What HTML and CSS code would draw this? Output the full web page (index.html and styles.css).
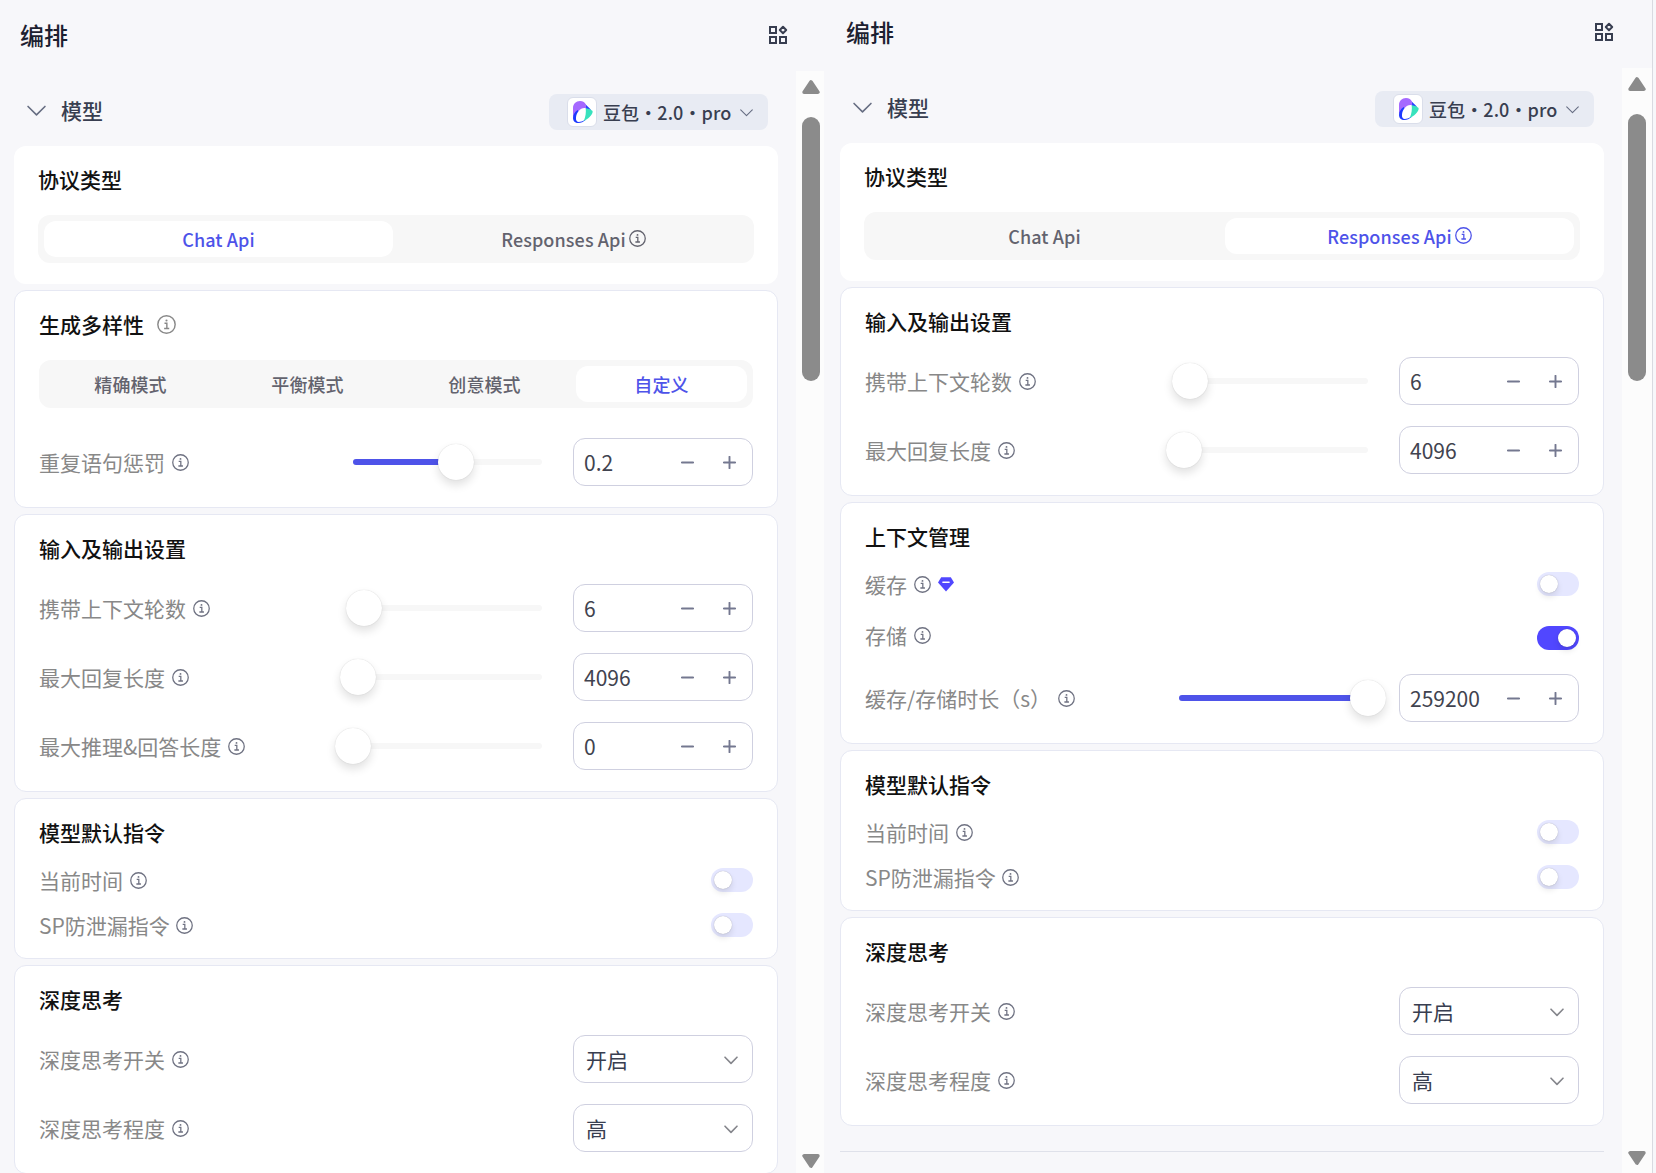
FILE: index.html
```html
<!doctype html>
<html lang="zh-CN">
<head>
    <meta charset="utf-8">
    <title>编排</title>
    <link rel="stylesheet" href="styles.css">
</head>

<body>
    <!-- shared icons -->
    <svg class="defs" width="0" height="0">
        <symbol id="info" viewBox="0 0 16 16">
            <circle cx="8" cy="8" r="7.3" fill="none" stroke="currentColor" stroke-width="1.2"/>
            <path d="M6.3 6.9h2v4.3M6 11.3h4.3" fill="none" stroke="currentColor" stroke-width="1.2"/>
            <circle cx="8" cy="4.6" r=".9" fill="currentColor"/>
        </symbol>
        <symbol id="apps" viewBox="0 0 20 20">
            <path d="M2 2h6v6h-6zM2 12h6v6h-6zM12 12h6v6h-6z" fill="none" stroke="currentColor" stroke-width="2"/>
            <path d="M15 1.8l3.2 3.2-3.2 3.2-3.2-3.2z" fill="none" stroke="currentColor" stroke-width="2" stroke-linejoin="round"/>
        </symbol>
        <symbol id="down" viewBox="0 0 18 11">
            <path d="M1 1.2l8 8 8-8" fill="none" stroke="currentColor" stroke-width="1.5" stroke-linecap="round" stroke-linejoin="round"/>
        </symbol>
        <symbol id="down-sm" viewBox="0 0 14 9">
            <path d="M1 1.2l6 6.2 6-6.2" fill="none" stroke="currentColor" stroke-width="1.6" stroke-linecap="round" stroke-linejoin="round"/>
        </symbol>
        <symbol id="minus" viewBox="0 0 13 13">
            <path d="M.8 6.5h11.4" stroke="currentColor" stroke-width="1.9" stroke-linecap="round"/>
        </symbol>
        <symbol id="plus" viewBox="0 0 13 13">
            <path d="M.8 6.5h11.4M6.5.8v11.4" stroke="currentColor" stroke-width="1.9" stroke-linecap="round"/>
        </symbol>
        <symbol id="arrow" viewBox="0 0 18 14">
            <path d="M9 1.8l7 10.4H2z" fill="currentColor" stroke="currentColor" stroke-width="3.4" stroke-linejoin="round"/>
        </symbol>
        <symbol id="gem" viewBox="0 0 16 15">
            <path d="M3.2.3h9.6L16 5.5 8 14.6 0 5.5z" fill="#5147ff"/>
            <path d="M4.9 5.2h6.2" stroke="#fff" stroke-width="1.4" stroke-linecap="round"/>
        </symbol>
        <symbol id="doubao" viewBox="0 0 20 22">
            <path d="M12.200 3L18 8.700l-5 .8z" fill="#2440ff"/>
            <path d="M0 16V7C0 3 3 0 7 0c3 0 5.200 1.500 6 4l.3 5-7 2z" fill="#a569ff"/>
            <path d="M4.600 9C1.500 11 0 14 0 17c0 3 2.200 5 5.200 5 3 0 5-1 7.300-3z" fill="#1c39ff"/>
            <path d="M12 7.200c3.200 0 6 1.300 7.600 2.700.4 2-1.100 4.200-3 6-1.800 1.800-3.600 3-6.100 4z" fill="#37e2bd"/>
            <path d="M12.700 7.300C8 6 3.400 11.500 3 16.500c-.3 3 .8 4.400 2.900 4.400 1.800 0 3.600-.5 5.100-1.600 1.600-3.500 2.200-8 1.700-12z" fill="#fff"/>
        </symbol>
    </svg>

    <div class="page">
        <div class="panel">
            <div class="header">
                <h1>编排</h1>
                <svg class="apps"><use href="#apps"/></svg>
            </div>
            <div class="body">
                <div class="content">
                    <div class="model">
                        <svg class="fold"><use href="#down"/></svg>
                        <h2>模型</h2>
                        <div class="pill">
                            <span class="logo"><svg><use href="#doubao"/></svg></span>
                            <span>豆包・2.0・pro</span>
                            <svg class="pill-down"><use href="#down"/></svg>
                        </div>
                    </div>

                    <div class="card plain">
                        <h3>协议类型</h3>
                        <div class="tabs">
                            <div class="tab on">Chat Api</div>
                            <div class="tab">Responses Api<svg class="info"><use href="#info"/></svg></div>
                        </div>
                    </div>

                    <div class="card">
                        <h3>生成多样性<svg class="info"><use href="#info"/></svg></h3>
                        <div class="tabs">
                            <div class="tab">精确模式</div>
                            <div class="tab">平衡模式</div>
                            <div class="tab">创意模式</div>
                            <div class="tab on">自定义</div>
                        </div>
                        <div class="row after-tabs">
                            <span class="label">重复语句惩罚<svg class="info"><use href="#info"/></svg></span>
                            <div class="slider" style="--pos:54.5%"><div class="fill"></div><div class="knob"></div></div>
                            <div class="number">0.2<svg><use href="#minus"/></svg><svg><use href="#plus"/></svg></div>
                        </div>
                    </div>

                    <div class="card">
                        <h3>输入及输出设置</h3>
                        <div class="row">
                            <span class="label">携带上下文轮数<svg class="info"><use href="#info"/></svg></span>
                            <div class="slider" style="--pos:5.8%"><div class="knob"></div></div>
                            <div class="number">6<svg><use href="#minus"/></svg><svg><use href="#plus"/></svg></div>
                        </div>
                        <div class="row">
                            <span class="label">最大回复长度<svg class="info"><use href="#info"/></svg></span>
                            <div class="slider" style="--pos:2.6%"><div class="knob"></div></div>
                            <div class="number">4096<svg><use href="#minus"/></svg><svg><use href="#plus"/></svg></div>
                        </div>
                        <div class="row">
                            <span class="label">最大推理&amp;回答长度<svg class="info"><use href="#info"/></svg></span>
                            <div class="slider" style="--pos:0%"><div class="knob"></div></div>
                            <div class="number">0<svg><use href="#minus"/></svg><svg><use href="#plus"/></svg></div>
                        </div>
                    </div>

                    <div class="card">
                        <h3>模型默认指令</h3>
                        <div class="row low">
                            <span class="label">当前时间<svg class="info"><use href="#info"/></svg></span>
                            <div class="switch"></div>
                        </div>
                        <div class="row low">
                            <span class="label">SP防泄漏指令<svg class="info"><use href="#info"/></svg></span>
                            <div class="switch"></div>
                        </div>
                    </div>

                    <div class="card">
                        <h3>深度思考</h3>
                        <div class="row">
                            <span class="label">深度思考开关<svg class="info"><use href="#info"/></svg></span>
                            <div class="select">开启<svg><use href="#down-sm"/></svg></div>
                        </div>
                        <div class="row">
                            <span class="label">深度思考程度<svg class="info"><use href="#info"/></svg></span>
                            <div class="select">高<svg><use href="#down-sm"/></svg></div>
                        </div>
                    </div>
                </div>
                <div class="scrollbar">
                    <svg><use href="#arrow"/></svg>
                    <div class="thumb"></div>
                    <svg class="flip"><use href="#arrow"/></svg>
                </div>
            </div>
        </div>

        <div class="panel right">
            <div class="header">
                <h1>编排</h1>
                <svg class="apps"><use href="#apps"/></svg>
            </div>
            <div class="body">
                <div class="content">
                    <div class="model">
                        <svg class="fold"><use href="#down"/></svg>
                        <h2>模型</h2>
                        <div class="pill">
                            <span class="logo"><svg><use href="#doubao"/></svg></span>
                            <span>豆包・2.0・pro</span>
                            <svg class="pill-down"><use href="#down"/></svg>
                        </div>
                    </div>

                    <div class="card plain">
                        <h3>协议类型</h3>
                        <div class="tabs">
                            <div class="tab">Chat Api</div>
                            <div class="tab on">Responses Api<svg class="info"><use href="#info"/></svg></div>
                        </div>
                    </div>

                    <div class="card">
                        <h3>输入及输出设置</h3>
                        <div class="row">
                            <span class="label">携带上下文轮数<svg class="info"><use href="#info"/></svg></span>
                            <div class="slider" style="--pos:5.8%"><div class="knob"></div></div>
                            <div class="number">6<svg><use href="#minus"/></svg><svg><use href="#plus"/></svg></div>
                        </div>
                        <div class="row">
                            <span class="label">最大回复长度<svg class="info"><use href="#info"/></svg></span>
                            <div class="slider" style="--pos:2.6%"><div class="knob"></div></div>
                            <div class="number">4096<svg><use href="#minus"/></svg><svg><use href="#plus"/></svg></div>
                        </div>
                    </div>

                    <div class="card">
                        <h3>上下文管理</h3>
                        <div class="row low">
                            <span class="label">缓存<svg class="info"><use href="#info"/></svg><svg class="gem"><use href="#gem"/></svg></span>
                            <div class="switch"></div>
                        </div>
                        <div class="row store">
                            <span class="label">存储<svg class="info"><use href="#info"/></svg></span>
                            <div class="switch on"></div>
                        </div>
                        <div class="row after-store">
                            <span class="label">缓存/存储时长（s）<svg class="info"><use href="#info"/></svg></span>
                            <div class="slider" style="--pos:100%"><div class="fill"></div><div class="knob"></div></div>
                            <div class="number">259200<svg><use href="#minus"/></svg><svg><use href="#plus"/></svg></div>
                        </div>
                    </div>

                    <div class="card">
                        <h3>模型默认指令</h3>
                        <div class="row low">
                            <span class="label">当前时间<svg class="info"><use href="#info"/></svg></span>
                            <div class="switch"></div>
                        </div>
                        <div class="row low">
                            <span class="label">SP防泄漏指令<svg class="info"><use href="#info"/></svg></span>
                            <div class="switch"></div>
                        </div>
                    </div>

                    <div class="card">
                        <h3>深度思考</h3>
                        <div class="row">
                            <span class="label">深度思考开关<svg class="info"><use href="#info"/></svg></span>
                            <div class="select">开启<svg><use href="#down-sm"/></svg></div>
                        </div>
                        <div class="row">
                            <span class="label">深度思考程度<svg class="info"><use href="#info"/></svg></span>
                            <div class="select">高<svg><use href="#down-sm"/></svg></div>
                        </div>
                    </div>

                    <div class="divider"></div>
                </div>
                <div class="scrollbar">
                    <svg><use href="#arrow"/></svg>
                    <div class="thumb"></div>
                    <svg class="flip"><use href="#arrow"/></svg>
                </div>
            </div>
        </div>
    </div>
</body>
</html>
```
FILE: styles.css
```css
* {
  box-sizing: border-box;
}

body {
  margin: 0;
  background: #f7f7fa;
  font-family: "Noto Sans CJK SC", sans-serif;
  overflow: hidden;
}

h1, h2, h3 {
  margin: 0;
  font-weight: 500;
}

svg {
  display: block;
  flex: none;
}

.defs {
  position: absolute;
}

.page {
  display: flex;
  height: 1173px;
}

.panel {
  width: 826px;
  height: 1173px;
  display: flex;
  flex-direction: column;
  overflow: hidden;
}

.panel.right {
  width: 827px;
  border-right: 1px solid #d9dae1;
}

/* header */
.header {
  height: 71px;
  flex: none;
  display: flex;
  justify-content: space-between;
  padding: 19px 38px 0 20px;
}

.right .header {
  height: 68px;
  padding-top: 16px;
}

.header h1 {
  font-size: 24px;
  line-height: 32px;
  color: #1c2030;
}

.apps {
  width: 20px;
  height: 20px;
  margin-top: 6px;
  color: #383e50;
}

.body {
  flex: 1;
  min-height: 0;
  display: flex;
}

.content {
  width: 764px;
  margin: 0 18px 0 14px;
  flex: none;
}

/* model bar */
.model {
  height: 75px;
  display: flex;
  align-items: flex-start;
  padding: 23px 10px 0 13px;
}

.fold {
  width: 19px;
  height: 12px;
  margin-top: 11px;
  color: #666d82;
}

.model h2 {
  flex: 1;
  margin-left: 15px;
  font-size: 21px;
  line-height: 33px;
  color: #383e50;
}

.pill {
  width: 219px;
  height: 36px;
  display: flex;
  align-items: center;
  padding-left: 18px;
  border-radius: 8px;
  background: #e8ebf3;
  color: #383e50;
  font-size: 18px;
  font-weight: 500;
  letter-spacing: 0.1px;
  white-space: nowrap;
}

.logo {
  width: 30px;
  height: 30px;
  margin-right: 6px;
  padding: 3px 0 0 5px;
  border: 1px solid #dadeea;
  border-radius: 6px;
  background: #fff;
}

.logo svg {
  width: 20px;
  height: 22px;
}

.pill-down {
  width: 13px;
  height: 8px;
  margin: 1px 0 0 9px;
  color: #666d82;
}

/* cards */
.card {
  margin-bottom: 6px;
  padding: 17px 24px 21px;
  border: 1px solid #e6e8f3;
  border-radius: 12px;
  background: #fff;
}

.card.plain {
  border: 0;
}

.card h3 {
  display: flex;
  align-items: center;
  margin-bottom: 20px;
  font-size: 21px;
  line-height: 32px;
  color: #111;
}

.info {
  width: 17px;
  height: 17px;
  color: #6f7282;
}

h3 .info {
  width: 19px;
  height: 19px;
  margin-left: 13px;
  color: #888;
}

.tabs {
  height: 48px;
  display: flex;
  gap: 6px;
  padding: 6px;
  border-radius: 12px;
  background: #f7f7f7;
}

.tab {
  flex: 1 1 0;
  display: flex;
  align-items: center;
  justify-content: center;
  border-radius: 12px;
  font-size: 18px;
  font-weight: 500;
  letter-spacing: 0.1px;
  color: #63636e;
}

.tab.on {
  background: #fff;
  color: #4e53e9;
}

.tab .info {
  margin: 0 0 1px 3px;
  color: inherit;
}

/* setting rows */
.row {
  height: 48px;
  display: flex;
  align-items: center;
}

.row + .row {
  margin-top: 21px;
}

.row.low {
  height: 24px;
}

.row.after-tabs {
  margin-top: 30px;
}

.row.store {
  height: 30px;
  margin-top: 24px;
}

.row.store .switch {
  align-self: flex-end;
}

.row.after-store {
  margin-top: 24px;
}

.label {
  flex: 1;
  display: flex;
  align-items: center;
  font-size: 21px;
  line-height: 24px;
  color: #888;
}

.label .info {
  margin-left: 6.5px;
}

.gem {
  width: 16px;
  height: 15px;
  margin-left: 7.5px;
}

.slider {
  position: relative;
  width: 189px;
  height: 6px;
  margin-right: 31px;
  border-radius: 3px;
  background: #f7f7f7;
}

.fill {
  width: var(--pos);
  height: 6px;
  border-radius: 3px;
  background: #4e53e9;
}

.knob {
  position: absolute;
  left: var(--pos);
  top: -15px;
  width: 36px;
  height: 36px;
  margin-left: -18px;
  border-radius: 50%;
  background: #fff;
  box-shadow: 0 0 1px rgba(0,0,0,0.2), 0 5px 10px rgba(0,0,0,0.12);
}

.number, .select {
  width: 180px;
  height: 48px;
  display: flex;
  align-items: center;
  border: 1px solid #cfd0e0;
  border-radius: 12px;
  font-size: 21px;
}

.number {
  padding: 0 16px 0 10px;
  color: #41434f;
}

.number svg {
  width: 13px;
  height: 13px;
  color: #747890;
}

.number svg:first-of-type {
  margin-left: auto;
  margin-right: 29px;
}

.select {
  justify-content: space-between;
  padding: 0 14px 0 12px;
  color: #383e50;
}

.select svg {
  width: 14px;
  height: 9px;
  margin-top: 2px;
  color: #85868c;
}

.switch {
  width: 42px;
  height: 24px;
  padding: 3px 2.5px;
  border-radius: 12px;
  background: #e5e7ff;
}

.switch::before {
  content: "";
  display: block;
  width: 18px;
  height: 18px;
  border-radius: 50%;
  background: #fff;
  box-shadow: 0 4px 6px rgba(0,0,0,0.1), 0 0 1px rgba(0,0,0,0.3);
}

.switch.on {
  padding-left: 20.5px;
  background: #5147ff;
}

.divider {
  margin-top: 25px;
  border-top: 1px solid #dfe1ea;
}

/* scrollbar */
.scrollbar {
  width: 28px;
  display: flex;
  flex-direction: column;
  padding: 9px 0 5px 6px;
  background: #fcfcfc;
}

.right .scrollbar {
  width: 30px;
  padding-bottom: 8px;
}

.scrollbar svg {
  width: 18px;
  height: 14px;
  color: #8b8b8b;
}

.thumb {
  width: 18px;
  height: 264px;
  margin: 23px 0 auto;
  border-radius: 9px;
  background: #8b8b8b;
}

.right .thumb {
  height: 267px;
}

.scrollbar .flip {
  transform: rotate(180deg);
}
```
